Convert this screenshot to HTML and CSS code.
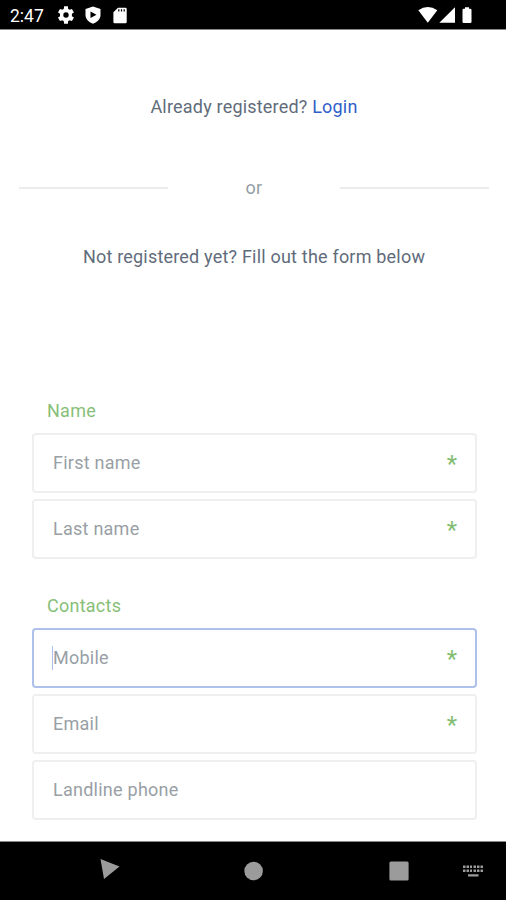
FILE: index.html
```html
<!DOCTYPE html>
<html lang="en">
<head>
<meta charset="utf-8">
<title>Register</title>
<link rel="stylesheet" href="styles.css">
</head>
<body>
<header class="status">
  <span class="clock">2:47</span>
  <svg class="gear" width="18" height="18" viewBox="2.900 2 20 20"><path fill-rule="evenodd" d="M19.400 13.300a7.500 7.500 0 0 0 0-2.600l2.300-1.600-2.200-3.900-2.600 1.100a7.500 7.500 0 0 0-1.600-.9L15 2.200h-4.200l-.4 3.200a7.500 7.500 0 0 0-1.600.9L6.200 5.200 4 9.100l2.300 1.600a7.500 7.500 0 0 0 0 2.600L4 14.900l2.200 3.900 2.600-1.100a7.500 7.500 0 0 0 1.600.9l.4 3.200H15l.3-3.200a7.500 7.500 0 0 0 1.600-.9l2.600 1.100 2.200-3.900zM12.900 9a3 3 0 1 1 0 6 3 3 0 0 1 0-6z"/></svg>
  <svg class="shield" width="16" height="18" viewBox="0 0 16 18"><path fill-rule="evenodd" d="M8 .5 15.500 3v6c0 4-3 7.200-7.500 8.700C3.500 16.200.5 13 .5 9V3zM5.500 5.500v6.500l6-3.200z"/></svg>
  <svg class="sd" width="14" height="17" viewBox="0 0 14 17"><path fill-rule="evenodd" d="M5 .7h7.500q1.200 0 1.200 1.200v13q0 1.300-1.300 1.300H1.700Q.4 16.200.4 14.900V5.300zM5.200 2.200v2.300h1.200V2.200zm2.700 0v2.300h1.200V2.200zm2.700 0v2.300h1.200V2.200z"/></svg>
  <svg class="signals" width="56" height="18" viewBox="0 0 56 18"><path d="M.3 4.300Q9.800-2.400 19.300 4.300L9.800 16.700zM37 1.200v15.500H21.300zM47 1.300h4v1.500h1.300q1.200 0 1.200 1.200v11.700q0 1.200-1.200 1.200h-6.600q-1.200 0-1.200-1.200V4q0-1.200 1.200-1.200H47z"/></svg>
</header>
<main>
  <p class="login">Already registered? <a>Login</a></p>
  <div class="divider"><i></i><span>or</span><i></i></div>
  <p class="intro">Not registered yet? Fill out the form below</p>
  <section>
    <h2>Name</h2>
    <div class="field"><span>First name</span><b>*</b></div>
    <div class="field"><span>Last name</span><b>*</b></div>
  </section>
  <section>
    <h2>Contacts</h2>
    <div class="field focused"><span>Mobile</span><b>*</b></div>
    <div class="field"><span>Email</span><b>*</b></div>
    <div class="field"><span>Landline phone</span></div>
  </section>
</main>
<nav>
  <svg class="back" width="20" height="22" viewBox="0 0 20 22"><path d="M.5 1 19.500 8.500 4 21z"/></svg>
  <svg class="home" width="20" height="20" viewBox="0 0 20 20"><circle cx="9.600" cy="10" r="9.300"/></svg>
  <svg class="recent" width="20" height="20" viewBox="0 0 20 20"><rect x=".4" y=".4" width="19.200" height="19.200" rx="1.500"/></svg>
  <svg class="keys" width="20" height="12" viewBox="0 0 20 12"><path d="M0 .5h2.500V3H0zM3.500.5H6V3H3.500zM7 .5h2V3H7zM10.500.5H13V3h-2.500zM14 .5h2.500V3H14zM17.500.5H20V3h-2.500zM0 4.500h2.500V7H0zM3.500 4.500H6V7H3.500zM7 4.500h2V7H7zM10.500 4.500H13V7h-2.500zM14 4.500h2.500V7H14zM17.500 4.500H20V7h-2.500zM5 9.200h10.500v2.200H5z"/></svg>
</nav>
</body>
</html>
```
FILE: styles.css
```css
* { box-sizing: border-box; }
body {
  margin: 0;
  height: 900px;
  display: flex;
  flex-direction: column;
  overflow: hidden;
  background: #fff;
  color: #5f6c7b;
  font: 18px/24px Roboto, sans-serif;
  letter-spacing: .25px;
}
svg { display: block; flex: none; }
.status {
  height: 30px;
  padding: 6px 32px 0 10px;
  display: flex;
  background: #000;
  border-bottom: 1px solid #888;
  color: #fff;
  fill: #fff;
}
.clock { width: 47px; font-size: 17.500px; line-height: 20px; letter-spacing: 0; }
.shield { margin-left: 10px; }
.sd { margin: 1px 0 0 12px; }
.signals { margin-left: auto; }
main { flex: 1; padding: 65px 30px 0 32px; }
p, h2 { margin: 0; font-weight: 400; font-size: 18px; }
p { text-align: center; letter-spacing: .2px; }
a { color: #2f5fc8; }
.divider {
  margin: 57px -13px 0;
  display: flex;
  justify-content: space-between;
  align-items: center;
  color: #959ea5;
}
.divider i { width: 149px; height: 2px; background: #ececee; }
.intro { margin-top: 45px; }
section { height: 195px; }
.intro + section { margin-top: 130px; }
h2 { margin: 0 0 10px 15px; color: #88bf78; }
.field {
  width: 445px;
  height: 60px;
  margin-bottom: 6px;
  padding: 0 18px 0 19px;
  display: flex;
  align-items: center;
  justify-content: space-between;
  border: 2px solid #efeff0;
  border-radius: 4px;
  color: #999fa5;
}
.field b { color: #83bd72; font-weight: 400; font-size: 24px; line-height: 24px; margin-top: 2px; letter-spacing: 0; }
.focused { border-color: #adc1ea; }
.focused span { box-shadow: -1px 0 #a9bee9; }
nav {
  height: 59px;
  padding-left: 100px;
  display: flex;
  align-items: flex-start;
  background: #000;
  border-top: 1px solid #888;
  fill: #9b9b9b;
}
.back { margin-top: 16px; }
.home { margin: 19px 0 0 124px; }
.recent { margin: 19px 0 0 125px; }
.keys { margin: 23px 0 0 54px; }
```
